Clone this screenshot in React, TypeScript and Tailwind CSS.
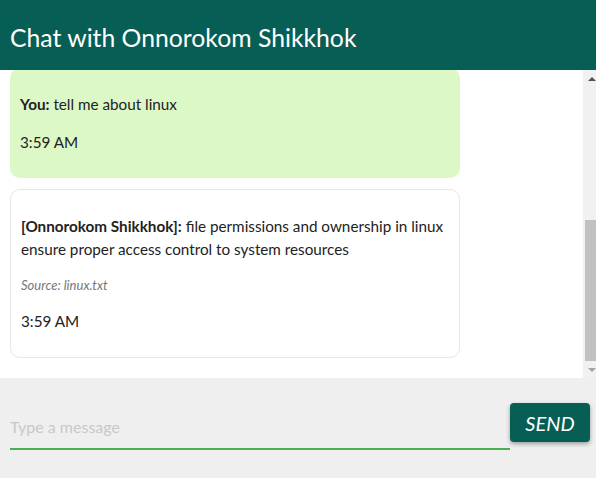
import React, { useState } from 'react';

type Msg = {
    who: 'user' | 'bot';
    name: string;
    text: string;
    source?: string;
    time: string;
};

const messages: Msg[] = [
    { who: 'user', name: 'You', text: 'tell me about linux', time: '3:59 AM' },
    {
        who: 'bot',
        name: '[Onnorokom Shikkhok]',
        text: 'file permissions and ownership in linux ensure proper access control to system resources',
        source: 'linux.txt',
        time: '3:59 AM',
    },
];

function Bubble({ m }: { m: Msg }) {
    const isUser = m.who === 'user';
    return (
        <div
            className={`w-[450px] shrink-0 rounded-[10px] p-[10px] ${isUser ? 'bg-[#dcf8c6]' : 'bg-white border border-[#ebe6e0]'}`}
        >
            <p className="my-[15px] text-[15.25px] leading-[23px] text-[#222]">
                <span className="font-bold">{m.name}:</span> {m.text}
            </p>
            {m.source && (
                <p className="my-[15px] text-[13px] leading-[19px] italic text-[#777]">Source: {m.source}</p>
            )}
            <p className="my-[15px] text-[15.25px] leading-[22px] text-[#222]">{m.time}</p>
        </div>
    );
}

function FakeScrollbar() {
    return (
        <div className="w-[17px] shrink-0 bg-[#f1f1f1] flex flex-col items-center">
            <div className="h-[17px] w-full flex items-center justify-center">
                <div className="w-0 h-0 border-l-[4px] border-r-[4px] border-b-[4px] border-l-transparent border-r-transparent border-b-[#505050]" />
            </div>
            <div className="flex-1 w-full flex flex-col justify-end px-[2px]">
                <div className="h-[141px] w-full bg-[#c1c1c1]" />
            </div>
            <div className="h-[17px] w-full flex items-center justify-center">
                <div className="w-0 h-0 border-l-[4px] border-r-[4px] border-t-[4px] border-l-transparent border-r-transparent border-t-[#a3a3a3]" />
            </div>
        </div>
    );
}

export default function App() {
    const [draft, setDraft] = useState('');

    return (
        <div className="w-full h-[478px] overflow-hidden bg-[#efefef]" style={{ fontFamily: 'Lato, "Open Sans", sans-serif' }}>
            <div className="w-[600px] h-full flex flex-col">
                {/* HEADER */}
                <div className="h-[70px] shrink-0 bg-[#075e54] flex items-center px-[10px]">
                    <h1 className="text-[24.75px] text-white pt-[6px]">
                        Chat with Onnorokom Shikkhok
                    </h1>
                </div>

                {/* MESSAGES */}
                <div className="h-[308px] shrink-0 flex bg-white">
                    <div className="flex-1 overflow-hidden flex flex-col justify-end gap-[11px] px-[10px] pb-[20px]">
                        {messages.map((m, i) => (
                            <Bubble key={i} m={m} />
                        ))}
                    </div>
                    <FakeScrollbar />
                </div>

                {/* INPUT */}
                <div className="flex-1 flex items-start px-[10px] pt-[25px]">
                    <input
                        value={draft}
                        onChange={(e) => setDraft(e.target.value)}
                        placeholder="Type a message"
                        className="w-[500px] h-[47px] bg-transparent border-b-2 border-[#4caf50] pt-[2px] text-[16px] text-[#333] outline-none placeholder:text-[#c8c8c8]"
                    />
                    <button className="w-[80px] h-[39px] rounded-[4px] bg-[#075e54] text-white italic text-[20px] shadow-[0_2px_4px_rgba(0,0,0,0.35)]">
                        SEND
                    </button>
                </div>
            </div>
        </div>
    );
}
